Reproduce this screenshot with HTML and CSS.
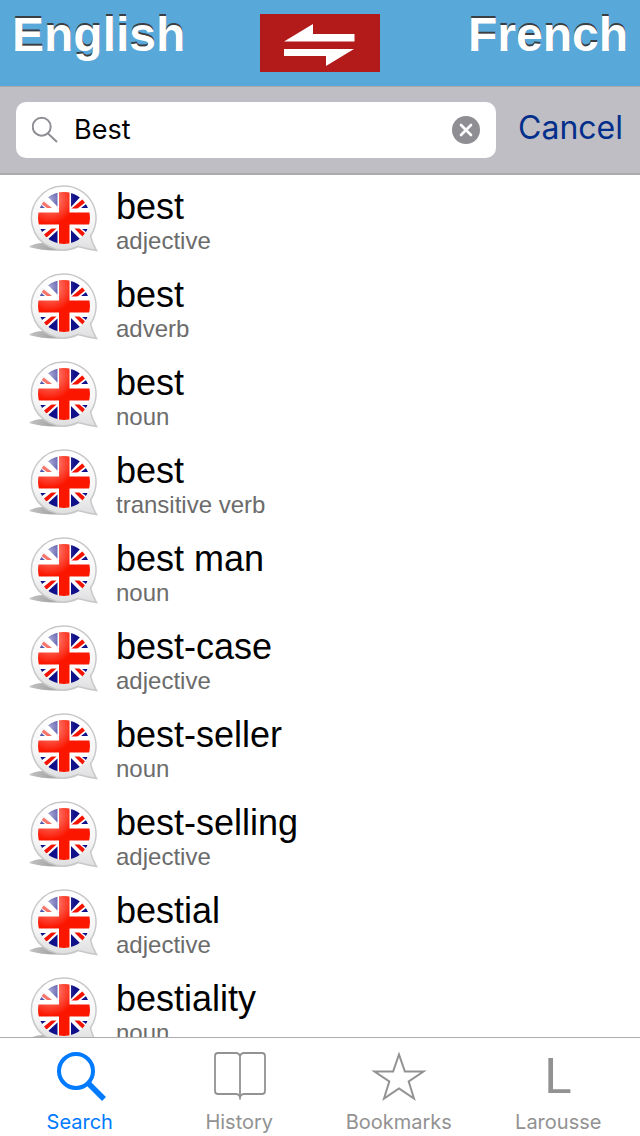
FILE: index.html
```html
<!DOCTYPE html>
<html lang="en">
<head>
<meta charset="utf-8">
<meta name="viewport" content="width=device-width, initial-scale=1">
<title>English – French dictionary</title>
<link rel="stylesheet" href="styles.css">
</head>
<body>
<svg class="defs" aria-hidden="true">
  <defs>
    <radialGradient id="shine" gradientUnits="userSpaceOnUse" cx="22" cy="16" r="25">
      <stop offset="0" stop-color="#fff" stop-opacity=".62"/>
      <stop offset=".5" stop-color="#fff" stop-opacity=".28"/>
      <stop offset="1" stop-color="#fff" stop-opacity="0"/>
    </radialGradient>
    <linearGradient id="rim" x1="0" y1="0" x2="0" y2="1">
      <stop offset="0" stop-color="#fff"/>
      <stop offset=".6" stop-color="#f6f6f6"/>
      <stop offset="1" stop-color="#dedee0"/>
    </linearGradient>
    <linearGradient id="shade" x1="0" y1="0" x2="1" y2="0">
      <stop offset="0" stop-color="#999" stop-opacity=".6"/>
      <stop offset="1" stop-color="#888"/>
    </linearGradient>
    <clipPath id="disc"><circle cx="36" cy="35" r="26"/></clipPath>
    <symbol id="flag" viewBox="0 0 72 72">
      <path d="M1 64Q6 60 16 60L45 66Q22 70 1 64Z" fill="url(#shade)"/>
      <path d="M36 3a32 32 0 0 1 26.500 50Q64 60 68.500 67.500Q59 66 50 63.500A32 32 0 1 1 36 3Z" fill="url(#rim)" stroke="#c8c8ca" stroke-width="1.500"/>
      <g clip-path="url(#disc)">
        <path fill="#fff" d="M10 9h52v52H10z"/>
        <path fill="#10108a" d="M18 12L30 24V8H20ZM54 12L43 24V8H52ZM18 58L30 47V62H20ZM54 58L43 47V62H52Z"/>
        <path fill="#10108a" d="M10 19L17 25H10ZM62 18L53 25H62ZM10 52L18 46H10ZM62 52L54 46H62Z"/>
        <path fill="#f21400" d="M11 19l3-2 10 8h-5ZM56 15l3 3-10 8h-6ZM13 54l11-9h5L16 57ZM46 45h5l9 8-3 3Z"/>
        <path fill="#fff" d="M29.500 8h13.500v54h-13.500zM9 25.500h54v20H9z"/>
        <path fill="#fb1600" d="M31 8h10.500v54H31zM9 29.500h54v12H9z"/>
        <circle cx="36" cy="35" r="26" fill="url(#shine)"/>
      </g>
    </symbol>
  </defs>
</svg>

<header class="header">
  <h1 class="language">English</h1>
  <button class="swap" type="button" aria-label="Swap languages">
    <svg viewBox="0 0 120 58" aria-hidden="true">
      <path d="M24 27.500L53 10V20H94.500V27.500ZM24 35H94L66 52V42H24Z" fill="#fff"/>
    </svg>
  </button>
  <h1 class="language language-target">French</h1>
</header>

<form class="search" role="search">
  <label class="field">
    <svg class="field-icon" viewBox="0 0 28 28" aria-hidden="true">
      <circle cx="9.700" cy="10.700" r="9"/><path d="M16 17.500L25 26"/>
    </svg>
    <input class="input" type="text" value="Best" aria-label="Search word">
    <button class="clear" type="button" aria-label="Clear text">
      <svg viewBox="0 0 28 28" aria-hidden="true">
        <circle cx="14" cy="14" r="14" fill="#8e8e93"/>
        <path d="M9 9L19 19M19 9L9 19" stroke="#fff" stroke-width="2.600" stroke-linecap="round"/>
      </svg>
    </button>
  </label>
  <button class="cancel" type="button">Cancel</button>
</form>

<main class="results">
  <ul class="list">
    <li><a class="row" href="#"><svg class="flag" aria-hidden="true"><use href="#flag"/></svg><span class="entry"><span class="word">best</span><span class="kind">adjective</span></span></a></li>
    <li><a class="row" href="#"><svg class="flag" aria-hidden="true"><use href="#flag"/></svg><span class="entry"><span class="word">best</span><span class="kind">adverb</span></span></a></li>
    <li><a class="row" href="#"><svg class="flag" aria-hidden="true"><use href="#flag"/></svg><span class="entry"><span class="word">best</span><span class="kind">noun</span></span></a></li>
    <li><a class="row" href="#"><svg class="flag" aria-hidden="true"><use href="#flag"/></svg><span class="entry"><span class="word">best</span><span class="kind">transitive verb</span></span></a></li>
    <li><a class="row" href="#"><svg class="flag" aria-hidden="true"><use href="#flag"/></svg><span class="entry"><span class="word">best man</span><span class="kind">noun</span></span></a></li>
    <li><a class="row" href="#"><svg class="flag" aria-hidden="true"><use href="#flag"/></svg><span class="entry"><span class="word">best-case</span><span class="kind">adjective</span></span></a></li>
    <li><a class="row" href="#"><svg class="flag" aria-hidden="true"><use href="#flag"/></svg><span class="entry"><span class="word">best-seller</span><span class="kind">noun</span></span></a></li>
    <li><a class="row" href="#"><svg class="flag" aria-hidden="true"><use href="#flag"/></svg><span class="entry"><span class="word">best-selling</span><span class="kind">adjective</span></span></a></li>
    <li><a class="row" href="#"><svg class="flag" aria-hidden="true"><use href="#flag"/></svg><span class="entry"><span class="word">bestial</span><span class="kind">adjective</span></span></a></li>
    <li><a class="row" href="#"><svg class="flag" aria-hidden="true"><use href="#flag"/></svg><span class="entry"><span class="word">bestiality</span><span class="kind">noun</span></span></a></li>
  </ul>
</main>

<nav class="tabs" aria-label="Sections">
  <a class="tab tab-active" href="#" aria-current="page">
    <svg class="tab-icon" viewBox="0 0 56 56" aria-hidden="true">
      <g fill="none" stroke="currentColor"><circle cx="24" cy="23" r="17" stroke-width="4"/><path d="M36 35L52 51" stroke-width="5.500"/></g>
    </svg>
    <span class="tab-label">Search</span>
  </a>
  <a class="tab" href="#">
    <svg class="tab-icon" viewBox="0 0 56 56" aria-hidden="true">
      <path d="M29 51.500V8Q28 5 25 5H7Q4 5 4 8V43Q4 46 7 46H25Q28 46 29 49Q30 46 33 46H51Q54 46 54 43V8Q54 5 51 5H33Q30 5 29 8" fill="none" stroke="currentColor" stroke-width="1.800"/>
    </svg>
    <span class="tab-label">History</span>
  </a>
  <a class="tab" href="#">
    <svg class="tab-icon" viewBox="0 0 56 56" aria-hidden="true">
      <path d="M28 6.500L33.900 23.500H52.500L37.700 33.500L43 50.500L28 40.500L13 50.500L18.300 33.500L3.500 23.500H22.100Z" fill="none" stroke="currentColor" stroke-width="2"/>
    </svg>
    <span class="tab-label">Bookmarks</span>
  </a>
  <a class="tab" href="#">
    <span class="tab-icon tab-letter" aria-hidden="true">L</span>
    <span class="tab-label">Larousse</span>
  </a>
</nav>
</body>
</html>
```
FILE: styles.css
```css
* {
  box-sizing: border-box;
}

body {
  display: flex;
  flex-direction: column;
  height: 100vh;
  margin: 0;
  background: #fff;
  color: #000;
  font-family: "Liberation Sans", Arial, sans-serif;
}

button {
  padding: 0;
  border: 0;
  background: none;
  font: inherit;
}

svg {
  display: block;
}

.defs {
  position: absolute;
  width: 0;
  height: 0;
}

.header {
  display: grid;
  grid-template-columns: 1fr auto 1fr;
  align-items: start;
  padding: 14px 12px;
  background: #58a8d9;
}

.language {
  margin: -7px 0 0;
  color: #fff;
  font-size: 48px;
  font-weight: bold;
  line-height: 56px;
  text-shadow: 0 -2px 0 #3a3f44;
}

.language-target {
  text-align: right;
}

.swap {
  width: 120px;
  height: 58px;
  background: #b31b1b;
}

.search {
  display: flex;
  align-items: center;
  gap: 22px;
  padding: 15px 17px 15px 16px;
  border-top: 1px solid #a9a9ac;
  border-bottom: 2px solid #acacae;
  background: #bfbec4;
  font-family: Inter, "Liberation Sans", sans-serif;
}

.field {
  display: flex;
  flex: 1;
  align-items: center;
  min-width: 0;
  height: 56px;
  padding: 0 16px;
  border-radius: 10px;
  background: #fff;
}

.field-icon {
  flex: none;
  width: 28px;
  height: 28px;
  fill: none;
  stroke: #8e8e93;
  stroke-width: 2;
}

.input {
  flex: 1;
  min-width: 0;
  padding: 0 0 0 14px;
  border: 0;
  outline: 0;
  background: none;
  color: #000;
  font: 27px/40px Inter, "Liberation Sans", sans-serif;
}

.clear {
  flex: none;
  width: 28px;
  height: 28px;
}

.cancel {
  padding-bottom: 4px;
  color: #032f8c;
  font-size: 32px;
  line-height: 40px;
}

.results {
  flex: 1;
  min-height: 0;
  overflow: hidden;
}

.list {
  margin: 0;
  padding: 0;
  list-style: none;
}

.row {
  display: flex;
  gap: 16px;
  padding: 8px 28px;
  color: inherit;
  text-decoration: none;
}

.flag {
  flex: none;
  width: 72px;
  height: 72px;
}

.entry {
  display: flex;
  flex-direction: column;
}

.word {
  font-size: 36px;
  line-height: 48px;
}

.kind {
  color: #6b6b6b;
  font-size: 24px;
  line-height: 20px;
}

.tabs {
  display: grid;
  grid-template-columns: repeat(4, 1fr);
  padding: 10px 2px 0 0;
  border-top: 1px solid #acacac;
  background: #fff;
  font-family: Inter, "Liberation Sans", sans-serif;
}

.tab {
  display: flex;
  flex-direction: column;
  align-items: center;
  gap: 4px;
  color: #929292;
  text-decoration: none;
}

.tab-active {
  color: #007aff;
}

.tab-icon {
  width: 56px;
  height: 56px;
}

.tab-letter {
  font-family: "Liberation Sans", Arial, sans-serif;
  font-size: 50px;
  line-height: 56px;
  text-align: center;
}

.tab-label {
  font-size: 20px;
  line-height: 28px;
}
```
